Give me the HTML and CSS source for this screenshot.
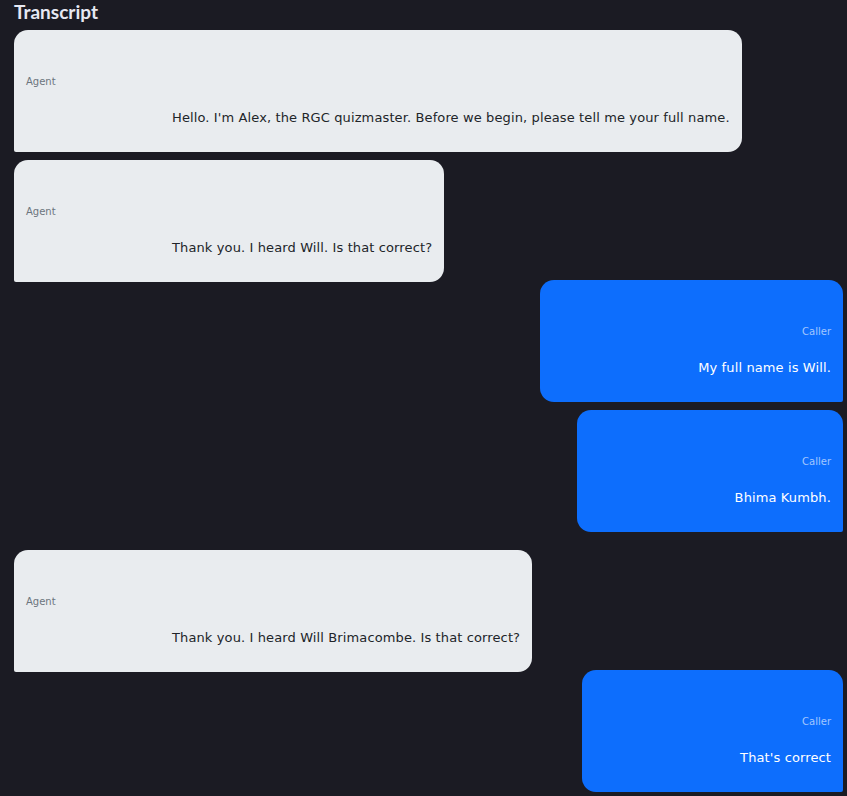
FILE: index.html
```html
<!DOCTYPE html>
<html>
<head>
<meta charset="utf-8">
<link rel="stylesheet" href="styles.css">
</head>
<body>
<h1 class="title">Transcript</h1>
<div class="transcript">
  <div class="msg agent">
    <div class="who">Agent</div>
    <div class="text">Hello. I'm Alex, the RGC quizmaster. Before we begin, please tell me your full name.</div>
  </div>
  <div class="msg agent">
    <div class="who">Agent</div>
    <div class="text">Thank you. I heard Will. Is that correct?</div>
  </div>
  <div class="msg caller">
    <div class="who">Caller</div>
    <div class="text">My full name is Will.</div>
  </div>
  <div class="msg caller">
    <div class="who">Caller</div>
    <div class="text">Bhima Kumbh.</div>
  </div>
  <div class="msg agent">
    <div class="who">Agent</div>
    <div class="text">Thank you. I heard Will Brimacombe. Is that correct?</div>
  </div>
  <div class="msg caller">
    <div class="who">Caller</div>
    <div class="text">That's correct</div>
  </div>
</div>
</body>
</html>
```
FILE: styles.css
```css
html, body {
  margin: 0;
  background: #1b1b23;
}
body {
  padding: 0 4px 0 14px;
  font-family: "DejaVu Sans", Verdana, sans-serif;
}
.title {
  margin: 0 0 6px;
  font-family: Lato, "Open Sans", sans-serif;
  font-weight: 700;
  font-size: 19px;
  line-height: 24px;
  color: #e6e8f2;
}
.transcript {
  display: flex;
  flex-direction: column;
}
.msg {
  padding: 12px;
  box-sizing: border-box;
}
.who {
  font-size: 10px;
  line-height: 14px;
  margin-top: 33px;
}
.text {
  font-size: 13px;
  line-height: 18px;
  letter-spacing: 0.12px;
  margin: 20px 0 13px 146px;
  text-align: right;
  white-space: nowrap;
}
.agent {
  align-self: flex-start;
  background: #e9ecef;
  color: #212529;
  border-radius: 14px 14px 14px 2px;
  margin-bottom: 8px;
}
.agent .who {
  color: #6c757d;
}
.caller {
  align-self: flex-end;
  background: #0d6efd;
  color: #ffffff;
  border-radius: 14px 14px 2px 14px;
  margin-top: -10px;
  margin-bottom: 18px;
}
.caller:last-child {
  margin-bottom: 0;
}
.caller .who {
  text-align: right;
  color: rgba(255, 255, 255, 0.62);
}
```
